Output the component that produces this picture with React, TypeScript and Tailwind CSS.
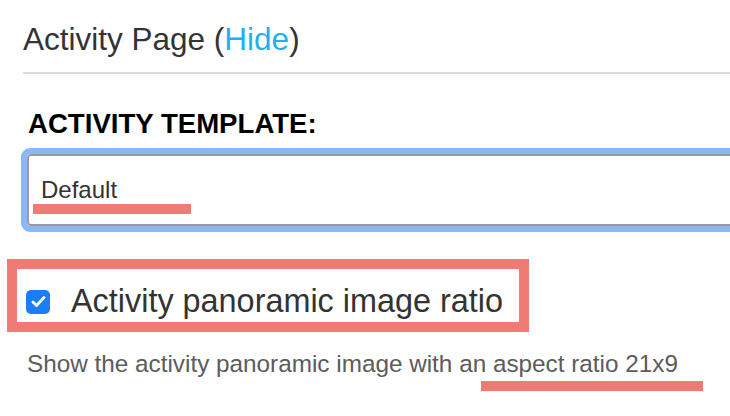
import React from "react";

function Underline({ className }: { className: string }) {
  return <div className={`pointer-events-none absolute h-[10px] bg-[#f07a74] ${className}`} />;
}

export default function App() {
  return (
    <div className="relative h-[416px] w-[730px] overflow-hidden bg-white font-['Liberation_Sans',Arial,sans-serif]">
      {/* section header */}
      <div className="ml-[23px] mt-[21px] border-b-2 border-[#dddddd] pb-[15px]">
        <h2 className="text-[31.5px] leading-[36px] text-[#333333]">
          Activity Page (<span className="text-[#1eb0f4]">Hide</span>)
        </h2>
      </div>

      {/* template select */}
      <div className="mt-[34px] pl-[28px]">
        <label className="block text-[27.6px] font-bold leading-[32px] text-black">ACTIVITY TEMPLATE:</label>
      </div>
      <div className="relative ml-[21px] mt-[8px] w-[760px] rounded-[9px] border-[6px] border-[#8ab8f7]">
        <div className="rounded-[4px] border-2 border-[#9a9a9a] bg-white py-[20px] pl-[12px]">
          <span className="block text-[24px] leading-[28px] text-[#333333]">Default</span>
        </div>
        <Underline className="left-[6px] top-[50px] w-[158px]" />
      </div>

      {/* checkbox option */}
      <div className="ml-[7px] mt-[27px] inline-flex w-[522px] items-center border-[10px] border-[#f07a74] pb-[2px] pl-[9px] pt-[14px]">
        <span className="flex h-[24px] w-[24px] items-center justify-center rounded-[5px] bg-[#1a7ef6]">
          <svg viewBox="0 0 24 24" className="h-[19px] w-[19px]" fill="none" stroke="white" strokeWidth="3.6" strokeLinecap="round" strokeLinejoin="round">
            <path d="M5 12.5l4.5 4.5L19 7" />
          </svg>
        </span>
        <span className="ml-[21px] text-[32.4px] leading-[37px] text-[#333333]">Activity panoramic image ratio</span>
      </div>

      {/* help text */}
      <div className="relative ml-[27px] mt-[18px]">
        <p className="text-[24.3px] leading-[28px] text-[#5c5c5c]">
          Show the activity panoramic image with an aspect ratio 21x9
        </p>
        <Underline className="left-[454px] top-[31px] w-[222px]" />
      </div>
    </div>
  );
}
